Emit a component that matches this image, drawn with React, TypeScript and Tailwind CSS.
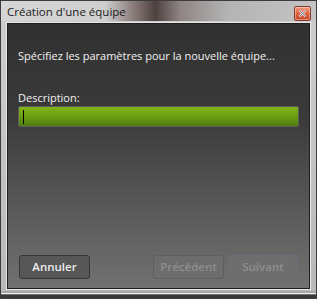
import React from "react";

export default function App() {
  const font = { fontFamily: '"Open Sans", "Liberation Sans", sans-serif' };
  return (
    <div className="w-[317px] h-[299px] bg-white">
      <div
        className="w-[317px] h-[299px] flex flex-col border border-[#3c3c3c] bg-[linear-gradient(to_bottom,#cfcfcf,#b8b8b8)]"
        style={font}
      >
        {/* title bar */}
        <div className="h-[20px] flex items-center justify-between pl-[6px] pr-[5px] bg-[linear-gradient(to_right,#d6d6d6_0%,#cfcfcf_33%,#8a7c7a_42%,#4e4240_49%,#8f8584_57%,#b4b4b4_72%,#c4c4c4_100%)]">
          <span className="text-[11.5px] leading-none text-[#1b1b1b] mt-[2px]">
            Création d'une équipe
          </span>
          <div className="w-[17px] h-[15px] mt-[4px] rounded-[2px] border border-[#8a3a2a] bg-[linear-gradient(to_bottom,#f4a088,#e0603c_50%,#c8482a)] flex items-center justify-center shadow-[inset_0_0_0_1px_rgba(255,255,255,0.35)]">
            <svg width="7" height="7" viewBox="0 0 7 7">
              <path d="M0.5 0.5 L6.5 6.5 M6.5 0.5 L0.5 6.5" stroke="#e8e8e8" strokeWidth="2" />
              <path d="M0.5 0.5 L6.5 6.5 M6.5 0.5 L0.5 6.5" stroke="#7a7a8a" strokeWidth="1" />
            </svg>
          </div>
        </div>
        {/* content area wrapper */}
        <div className="flex-1 px-[5px] pt-[1px] pb-[1px] flex flex-col">
          <div className="flex-1 border border-[#e6e6e6]">
            <div className="h-full border border-[#1e1e1e] bg-[linear-gradient(to_bottom,#313131_0%,#3a3a3a_35%,#555555_65%,#717171_100%)] flex flex-col px-[10px]">
              <div className="pt-[24px] text-[11px] leading-[16px] text-[#f2f2f2]">
                Spécifiez les paramètres pour la nouvelle équipe...
              </div>
              <div className="pt-[26px] text-[11px] leading-[16px] text-[#f2f2f2]">
                Description:
              </div>
              <div className="mt-[0px] h-[21px] rounded-[2px] border border-[#5c5c5c] bg-[linear-gradient(to_bottom,#82b418,#6c9e12_50%,#4e7c10)] flex items-center pl-[4px]">
                <div className="w-[1px] h-[14px] bg-black" />
              </div>
              <div className="flex-1" />
              <div className="flex items-center pb-[9px] pl-[1px] pr-[1px]">
                <button className="w-[71px] h-[24px] rounded-[3px] border border-[#363636] bg-[#575757] text-[11.5px] text-[#ececec] font-semibold">
                  Annuler
                </button>
                <div className="flex-1" />
                <button className="w-[71px] h-[24px] rounded-[3px] border border-[#5e5e5e] bg-[#6d6d6d] text-[11.5px] text-[#8e8e8e] font-semibold">
                  Précédent
                </button>
                <button className="ml-[4px] w-[70px] h-[24px] rounded-[3px] border border-[#66707a] bg-[#6e6e6e] text-[11.5px] text-[#8e8e8e] font-semibold">
                  Suivant
                </button>
              </div>
            </div>
          </div>
        </div>
        <div className="h-[7px] flex flex-col">
          <div className="h-[2px] bg-[#a8a8a8]" />
          <div className="h-[1px] bg-[#f0f0f0]" />
          <div className="h-[1px] bg-[#707070]" />
          <div className="h-[3px] bg-[#3a3a3a]" />
        </div>
      </div>
    </div>
  );
}
